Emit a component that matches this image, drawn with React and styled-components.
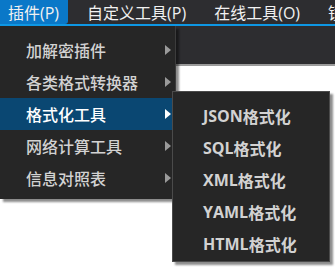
import React from 'react';
import styled, { createGlobalStyle } from 'styled-components';

const GlobalStyle = createGlobalStyle`
  html, body {
    margin: 0;
    padding: 0;
    background: #ffffff;
    overflow: hidden;
  }
  body {
    font-family: "Noto Sans CJK SC", "Open Sans", sans-serif;
  }
`;

const Window = styled.div`
  position: relative;
  width: 335px;
  height: 267px;
  background: #ffffff;
  overflow: hidden;
`;

const MenuBar = styled.div`
  display: flex;
  gap: 11px;
  height: 24px;
  background: #2d2d30;
  border-bottom: 2px solid #0e97e4;
  white-space: nowrap;
`;

const BarItem = styled.div`
  display: flex;
  flex-shrink: 0;
  align-items: center;
  padding: 0 9px 0 8px;
  font-family: "Open Sans", "Noto Sans CJK SC", sans-serif;
  font-size: 16px;
  color: #f1f1f1;
  background: ${p => (p.active ? '#0a78c8' : 'transparent')};
  border-radius: ${p => (p.active ? '0 0 3px 0' : '0')};
`;

const ToolStrip = styled.div`
  height: 38px;
  background: #2d2d30;
  border-bottom: 2px solid #9b9b9b;
`;

const Dropdown = styled.div`
  position: absolute;
  left: 0;
  top: 26px;
  width: 175px;
  padding: 8px 0 5px;
  background: #262626;
  border-right: 1px solid #3c3c3c;
  box-shadow: 3px 3px 2px rgba(0, 0, 0, 0.45);
`;

const Row = styled.div`
  display: flex;
  align-items: center;
  height: 32px;
  padding-left: ${p => p.indent}px;
  padding-right: 1px;
  margin-right: 3px;
  font-size: 16px;
  font-weight: ${p => (p.bold ? 700 : 500)};
  color: ${p => (p.active ? '#ffffff' : '#d2d2d2')};
  background: ${p => (p.active ? '#0a4772' : 'transparent')};
  white-space: nowrap;
`;

const Arrow = styled.span`
  margin-left: auto;
  width: 0;
  height: 0;
  border-top: 5px solid transparent;
  border-bottom: 5px solid transparent;
  border-left: 6px solid ${p => (p.active ? '#ffffff' : '#9a9a9a')};
`;

const SubMenu = styled.div`
  position: absolute;
  left: 172px;
  top: 91px;
  width: 156px;
  height: 161px;
  padding: 8px 0 0;
  background: #262626;
  border: 1px solid #4b4b4b;
  box-shadow: 3px 3px 2px rgba(0, 0, 0, 0.45);
`;

const SubLabel = styled.span`
  font-family: "Open Sans", "Noto Sans CJK SC", sans-serif;
`;

const barItems = ['插件(P)', '自定义工具(P)', '在线工具(O)', '镜像工具(M)'];
const menuItems = ['加解密插件', '各类格式转换器', '格式化工具', '网络计算工具', '信息对照表'];
const subItems = ['JSON', 'SQL', 'XML', 'YAML', 'HTML'];

export default function App() {
  return (
    <Window>
      <GlobalStyle />
      <MenuBar>
        {barItems.map((t, i) => (
          <BarItem key={t} active={i === 0}>{t}</BarItem>
        ))}
      </MenuBar>
      <ToolStrip />
      <Dropdown>
        {menuItems.map((t, i) => (
          <Row key={t} indent={26} active={i === 2}>
            {t}
            <Arrow active={i === 2} />
          </Row>
        ))}
      </Dropdown>
      <SubMenu>
        {subItems.map(t => (
          <Row key={t} indent={30} bold>
            <SubLabel>{t}</SubLabel>格式化
          </Row>
        ))}
      </SubMenu>
    </Window>
  );
}
